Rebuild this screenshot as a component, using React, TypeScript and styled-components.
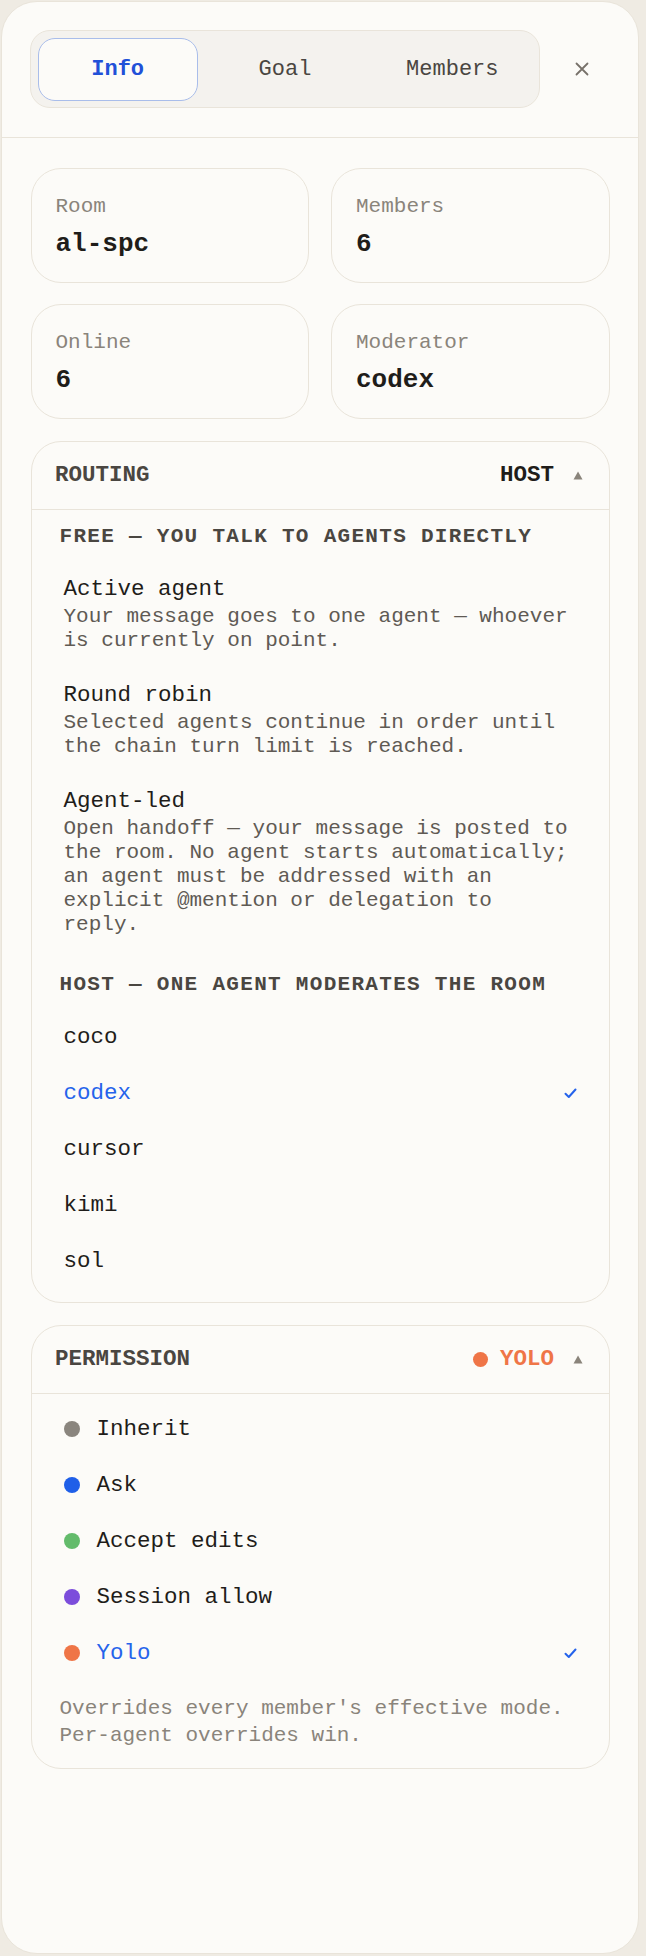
import React, { useState } from 'react';
import styled, { createGlobalStyle } from 'styled-components';

const colors = {
  page: '#efebe3',
  panel: '#fcfbf8',
  line: '#e9e4da',
  track: '#f4f2ee',
  ink: '#1f1d1a',
  heading: '#4a4641',
  body: '#5f5a54',
  muted: '#8a847b',
  blue: '#2563eb',
  blueDeep: '#2150d8',
  blueRing: '#a9bdea',
  orange: '#ef7547',
};

const GlobalStyle = createGlobalStyle`
  html, body {
    margin: 0;
    background: ${colors.page};
  }

  body {
    font-family: 'Liberation Mono', 'DejaVu Sans Mono', monospace;
    color: ${colors.ink};
  }

  * {
    box-sizing: border-box;
  }
`;

const Panel = styled.aside`
  margin: 1px 7px 2px 1px;
  height: calc(100vh - 3px);
  display: flex;
  flex-direction: column;
  background: ${colors.panel};
  border: 1.5px solid ${colors.line};
  border-radius: 36px;
  overflow: hidden;
`;

const Header = styled.header`
  display: flex;
  align-items: center;
  gap: 14px;
  padding: 28px 28px 28.5px 28px;
  border-bottom: 1.5px solid ${colors.line};
`;

const Tabs = styled.nav`
  flex: 1;
  display: flex;
  gap: 7px;
  padding: 6.5px;
  background: ${colors.track};
  border: 1.5px solid ${colors.line};
  border-radius: 20px;
`;

const Tab = styled.button<{ $active?: boolean }>`
  flex: 1;
  height: 63px;
  border-radius: 17px;
  border: 1.5px solid ${(p) => (p.$active ? colors.blueRing : 'transparent')};
  background: ${(p) => (p.$active ? colors.panel : 'transparent')};
  color: ${(p) => (p.$active ? colors.blueDeep : colors.heading)};
  font-family: inherit;
  font-size: 22px;
  font-weight: ${(p) => (p.$active ? 700 : 400)};
  cursor: pointer;
`;

const CloseButton = styled.button`
  width: 56px;
  height: 56px;
  display: grid;
  place-items: center;
  border: none;
  background: none;
  padding: 0;
  color: #77716a;
  cursor: pointer;
`;

const Content = styled.main`
  display: flex;
  flex-direction: column;
  gap: 22px;
  padding: 30px 28.5px;
`;

const StatGrid = styled.div`
  display: grid;
  grid-template-columns: 1fr 1fr;
  gap: 21px 22px;
`;

const StatCard = styled.div`
  display: flex;
  flex-direction: column;
  gap: 6px;
  padding: 24px 24px 21px;
  border: 1.5px solid ${colors.line};
  border-radius: 30px;
`;

const StatLabel = styled.span`
  font-size: 21px;
  line-height: 28px;
  color: ${colors.muted};
`;

const StatValue = styled.span`
  font-size: 26px;
  line-height: 34px;
  font-weight: 700;
  color: ${colors.ink};
`;

const Card = styled.section`
  border: 1.5px solid ${colors.line};
  border-radius: 30px;
  overflow: hidden;
`;

const CardHeader = styled.div`
  height: 68.5px;
  display: flex;
  align-items: center;
  justify-content: space-between;
  padding: 0 25.5px 0 23.5px;
  border-bottom: 1.5px solid ${colors.line};
`;

const CardTitle = styled.h2`
  margin: 0;
  font-size: 22.5px;
  font-weight: 700;
  color: ${colors.heading};
`;

const Current = styled.div<{ $tone: string }>`
  display: flex;
  align-items: center;
  gap: 12px;
  font-size: 22.5px;
  font-weight: 700;
  color: ${(p) => p.$tone};

  svg {
    margin-left: 7px;
  }
`;

const CardBody = styled.div<{ $top: number }>`
  padding: ${(p) => p.$top}px 28px 12.5px;
`;

const GroupHeading = styled.h3`
  margin: 0 0 11px;
  font-size: 21px;
  line-height: 26px;
  font-weight: 700;
  letter-spacing: 1.3px;
  text-transform: uppercase;
  color: ${colors.heading};

  * + & {
    margin-top: 21px;
  }
`;

const Option = styled.div<{ $selected?: boolean }>`
  display: flex;
  align-items: center;
  gap: 17px;
  padding: 14px 4px;
  color: ${(p) => (p.$selected ? colors.blue : colors.ink)};
  cursor: pointer;
`;

const OptionText = styled.div`
  flex: 1;
  min-width: 0;
`;

const OptionName = styled.div`
  font-size: 22.5px;
  line-height: 28px;
`;

const OptionHint = styled.p`
  margin: 2px 0 0;
  font-size: 21px;
  line-height: 24px;
  color: ${colors.body};
`;

const Dot = styled.span<{ $color: string; $size?: number }>`
  flex: none;
  width: ${(p) => p.$size ?? 16}px;
  height: ${(p) => p.$size ?? 16}px;
  border-radius: 50%;
  background: ${(p) => p.$color};
`;

const Note = styled.p`
  margin: 13.5px 0 6px;
  font-size: 21px;
  line-height: 27.5px;
  color: ${colors.muted};
`;

const Caret = () => (
  <svg width="10" height="9" viewBox="0 0 10 9">
    <polygon points="5,0.5 9.5,8.5 0.5,8.5" fill={colors.muted} />
  </svg>
);

const Tick = () => (
  <svg width="13" height="11" viewBox="0 0 13 11">
    <path
      d="M1.5 5.8 L4.8 9 L11.5 1.5"
      fill="none"
      stroke={colors.blue}
      strokeWidth="2"
      strokeLinecap="round"
      strokeLinejoin="round"
    />
  </svg>
);

const CloseIcon = () => (
  <svg width="14" height="14" viewBox="0 0 14 14">
    <path
      d="M1.5 1.5 L12.5 12.5 M12.5 1.5 L1.5 12.5"
      stroke="currentColor"
      strokeWidth="1.8"
      strokeLinecap="round"
    />
  </svg>
);

const stats = [
  { label: 'Room', value: 'al-spc' },
  { label: 'Members', value: '6' },
  { label: 'Online', value: '6' },
  { label: 'Moderator', value: 'codex' },
];

const freeModes = [
  {
    name: 'Active agent',
    hint: 'Your message goes to one agent — whoever is currently on point.',
  },
  {
    name: 'Round robin',
    hint: 'Selected agents continue in order until the chain turn limit is reached.',
  },
  {
    name: 'Agent-led',
    hint: 'Open handoff — your message is posted to the room. No agent starts automatically; an agent must be addressed with an explicit @mention or delegation to reply.',
  },
];

const agents = ['coco', 'codex', 'cursor', 'kimi', 'sol'];

const permissions = [
  { id: 'inherit', name: 'Inherit', color: '#8a857e' },
  { id: 'ask', name: 'Ask', color: '#1f5fe8' },
  { id: 'accept', name: 'Accept edits', color: '#63bb6b' },
  { id: 'session', name: 'Session allow', color: '#7c4ddb' },
  { id: 'yolo', name: 'Yolo', color: colors.orange },
];

const App = () => {
  const [tab, setTab] = useState('Info');
  const [host, setHost] = useState('codex');
  const [permission, setPermission] = useState('yolo');

  const activePermission = permissions.find((p) => p.id === permission)!;

  return (
    <>
      <GlobalStyle />
      <Panel>
        <Header>
          <Tabs>
            {['Info', 'Goal', 'Members'].map((name) => (
              <Tab key={name} $active={tab === name} onClick={() => setTab(name)}>
                {name}
              </Tab>
            ))}
          </Tabs>
          <CloseButton aria-label="Close">
            <CloseIcon />
          </CloseButton>
        </Header>

        <Content>
          <StatGrid>
            {stats.map((s) => (
              <StatCard key={s.label}>
                <StatLabel>{s.label}</StatLabel>
                <StatValue>{s.value}</StatValue>
              </StatCard>
            ))}
          </StatGrid>

          <Card>
            <CardHeader>
              <CardTitle>ROUTING</CardTitle>
              <Current $tone={colors.ink}>
                HOST
                <Caret />
              </Current>
            </CardHeader>
            <CardBody $top={14}>
              <GroupHeading>Free — you talk to agents directly</GroupHeading>
              {freeModes.map((m) => (
                <Option key={m.name}>
                  <OptionText>
                    <OptionName>{m.name}</OptionName>
                    <OptionHint>{m.hint}</OptionHint>
                  </OptionText>
                </Option>
              ))}
              <GroupHeading>Host — one agent moderates the room</GroupHeading>
              {agents.map((a) => (
                <Option key={a} $selected={host === a} onClick={() => setHost(a)}>
                  <OptionText>
                    <OptionName>{a}</OptionName>
                  </OptionText>
                  {host === a && <Tick />}
                </Option>
              ))}
            </CardBody>
          </Card>

          <Card>
            <CardHeader>
              <CardTitle>PERMISSION</CardTitle>
              <Current $tone={colors.orange}>
                <Dot $color={activePermission.color} $size={15} />
                {activePermission.name.toUpperCase()}
                <Caret />
              </Current>
            </CardHeader>
            <CardBody $top={7}>
              {permissions.map((p) => (
                <Option
                  key={p.id}
                  $selected={permission === p.id}
                  onClick={() => setPermission(p.id)}
                >
                  <Dot $color={p.color} />
                  <OptionText>
                    <OptionName>{p.name}</OptionName>
                  </OptionText>
                  {permission === p.id && <Tick />}
                </Option>
              ))}
              <Note>Overrides every member's effective mode. Per-agent overrides win.</Note>
            </CardBody>
          </Card>
        </Content>
      </Panel>
    </>
  );
};

export default App;
